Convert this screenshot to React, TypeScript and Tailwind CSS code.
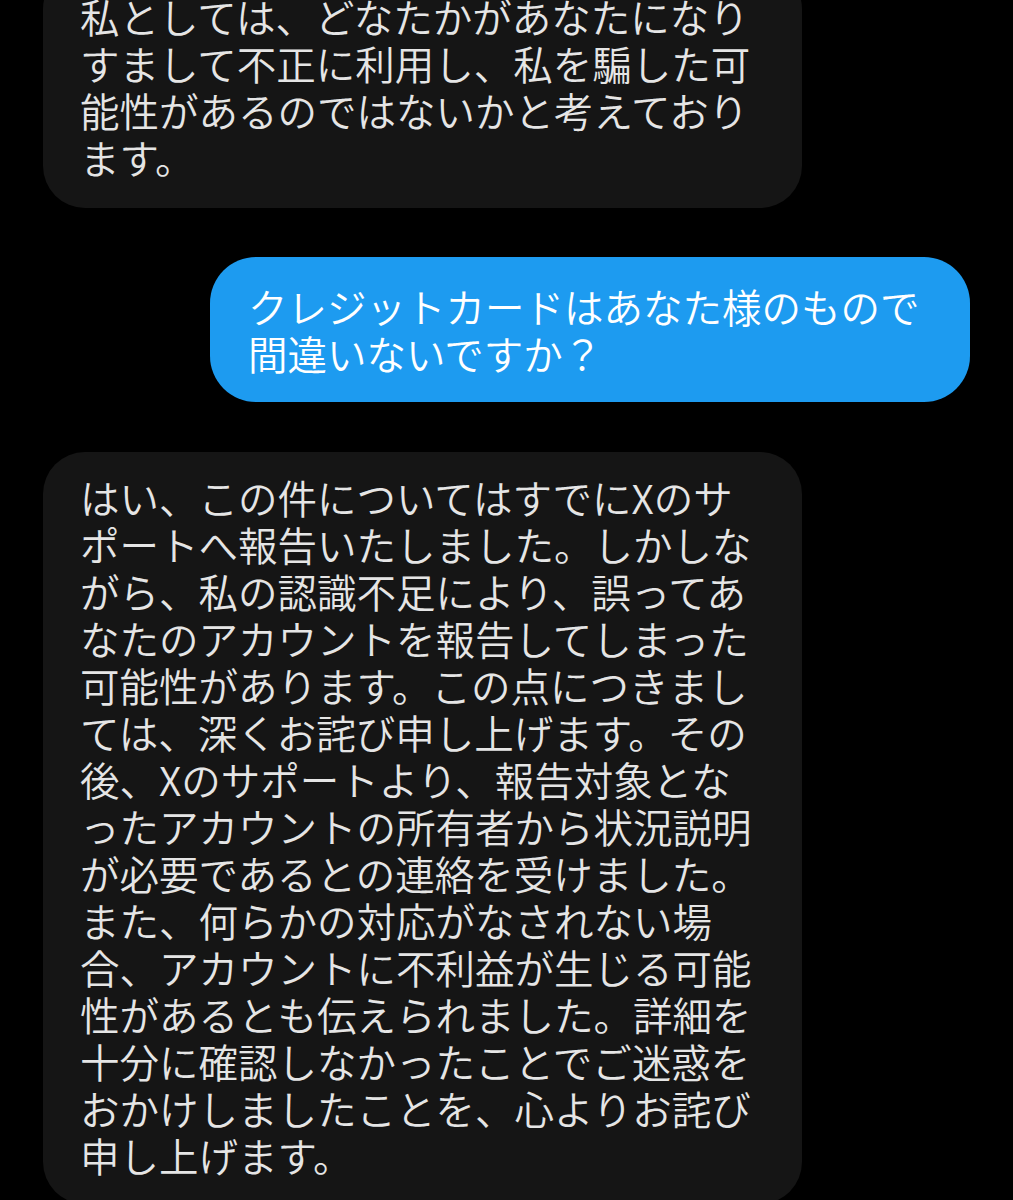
import React from 'react';

const first = [
  '私としては、どなたかがあなたになり',
  'すまして不正に利用し、私を騙した可',
  '能性があるのではないかと考えており',
  'ます。',
];

const mine = ['クレジットカードはあなた様のもので', '間違いないですか？'];

const reply = [
  'はい、この件についてはすでにXのサ',
  'ポートへ報告いたしました。しかしな',
  'がら、私の認識不足により、誤ってあ',
  'なたのアカウントを報告してしまった',
  '可能性があります。この点につきまし',
  'ては、深くお詫び申し上げます。その',
  '後、Xのサポートより、報告対象とな',
  'ったアカウントの所有者から状況説明',
  'が必要であるとの連絡を受けました。',
  'また、何らかの対応がなされない場',
  '合、アカウントに不利益が生じる可能',
  '性があるとも伝えられました。詳細を',
  '十分に確認しなかったことでご迷惑を',
  'おかけしましたことを、心よりお詫び',
  '申し上げます。',
];

const Lines = ({ lines }: { lines: string[] }) => (
  <>
    {lines.map((l, i) => (
      <div key={i} className="whitespace-nowrap">
        {l}
      </div>
    ))}
  </>
);

export default function App() {
  return (
    <div
      className="w-[1013px] h-[1200px] overflow-hidden bg-black text-[39.5px] leading-[47px] font-[350]"
      style={{ fontFamily: '"Noto Sans CJK JP", "Noto Sans", sans-serif' }}
    >
      <div className="flex flex-col">
        <div className="ml-[43px] mt-[-33px] w-[759px] rounded-[42px] bg-[#151515] pl-[37px] pt-[25px] pb-[28px] text-[#e5e5e5]">
          <Lines lines={first} />
        </div>

        <div className="ml-[210px] mt-[49px] w-[760px] rounded-[46px] bg-[#1d9bf0] pl-[38px] pt-[25px] pb-[26px] text-white">
          <Lines lines={mine} />
        </div>

        <div className="ml-[43px] mt-[50px] w-[759px] rounded-[42px] bg-[#151515] pl-[37px] pt-[21px] pb-[26px] text-[#e5e5e5]">
          <Lines lines={reply} />
        </div>
      </div>
    </div>
  );
}
